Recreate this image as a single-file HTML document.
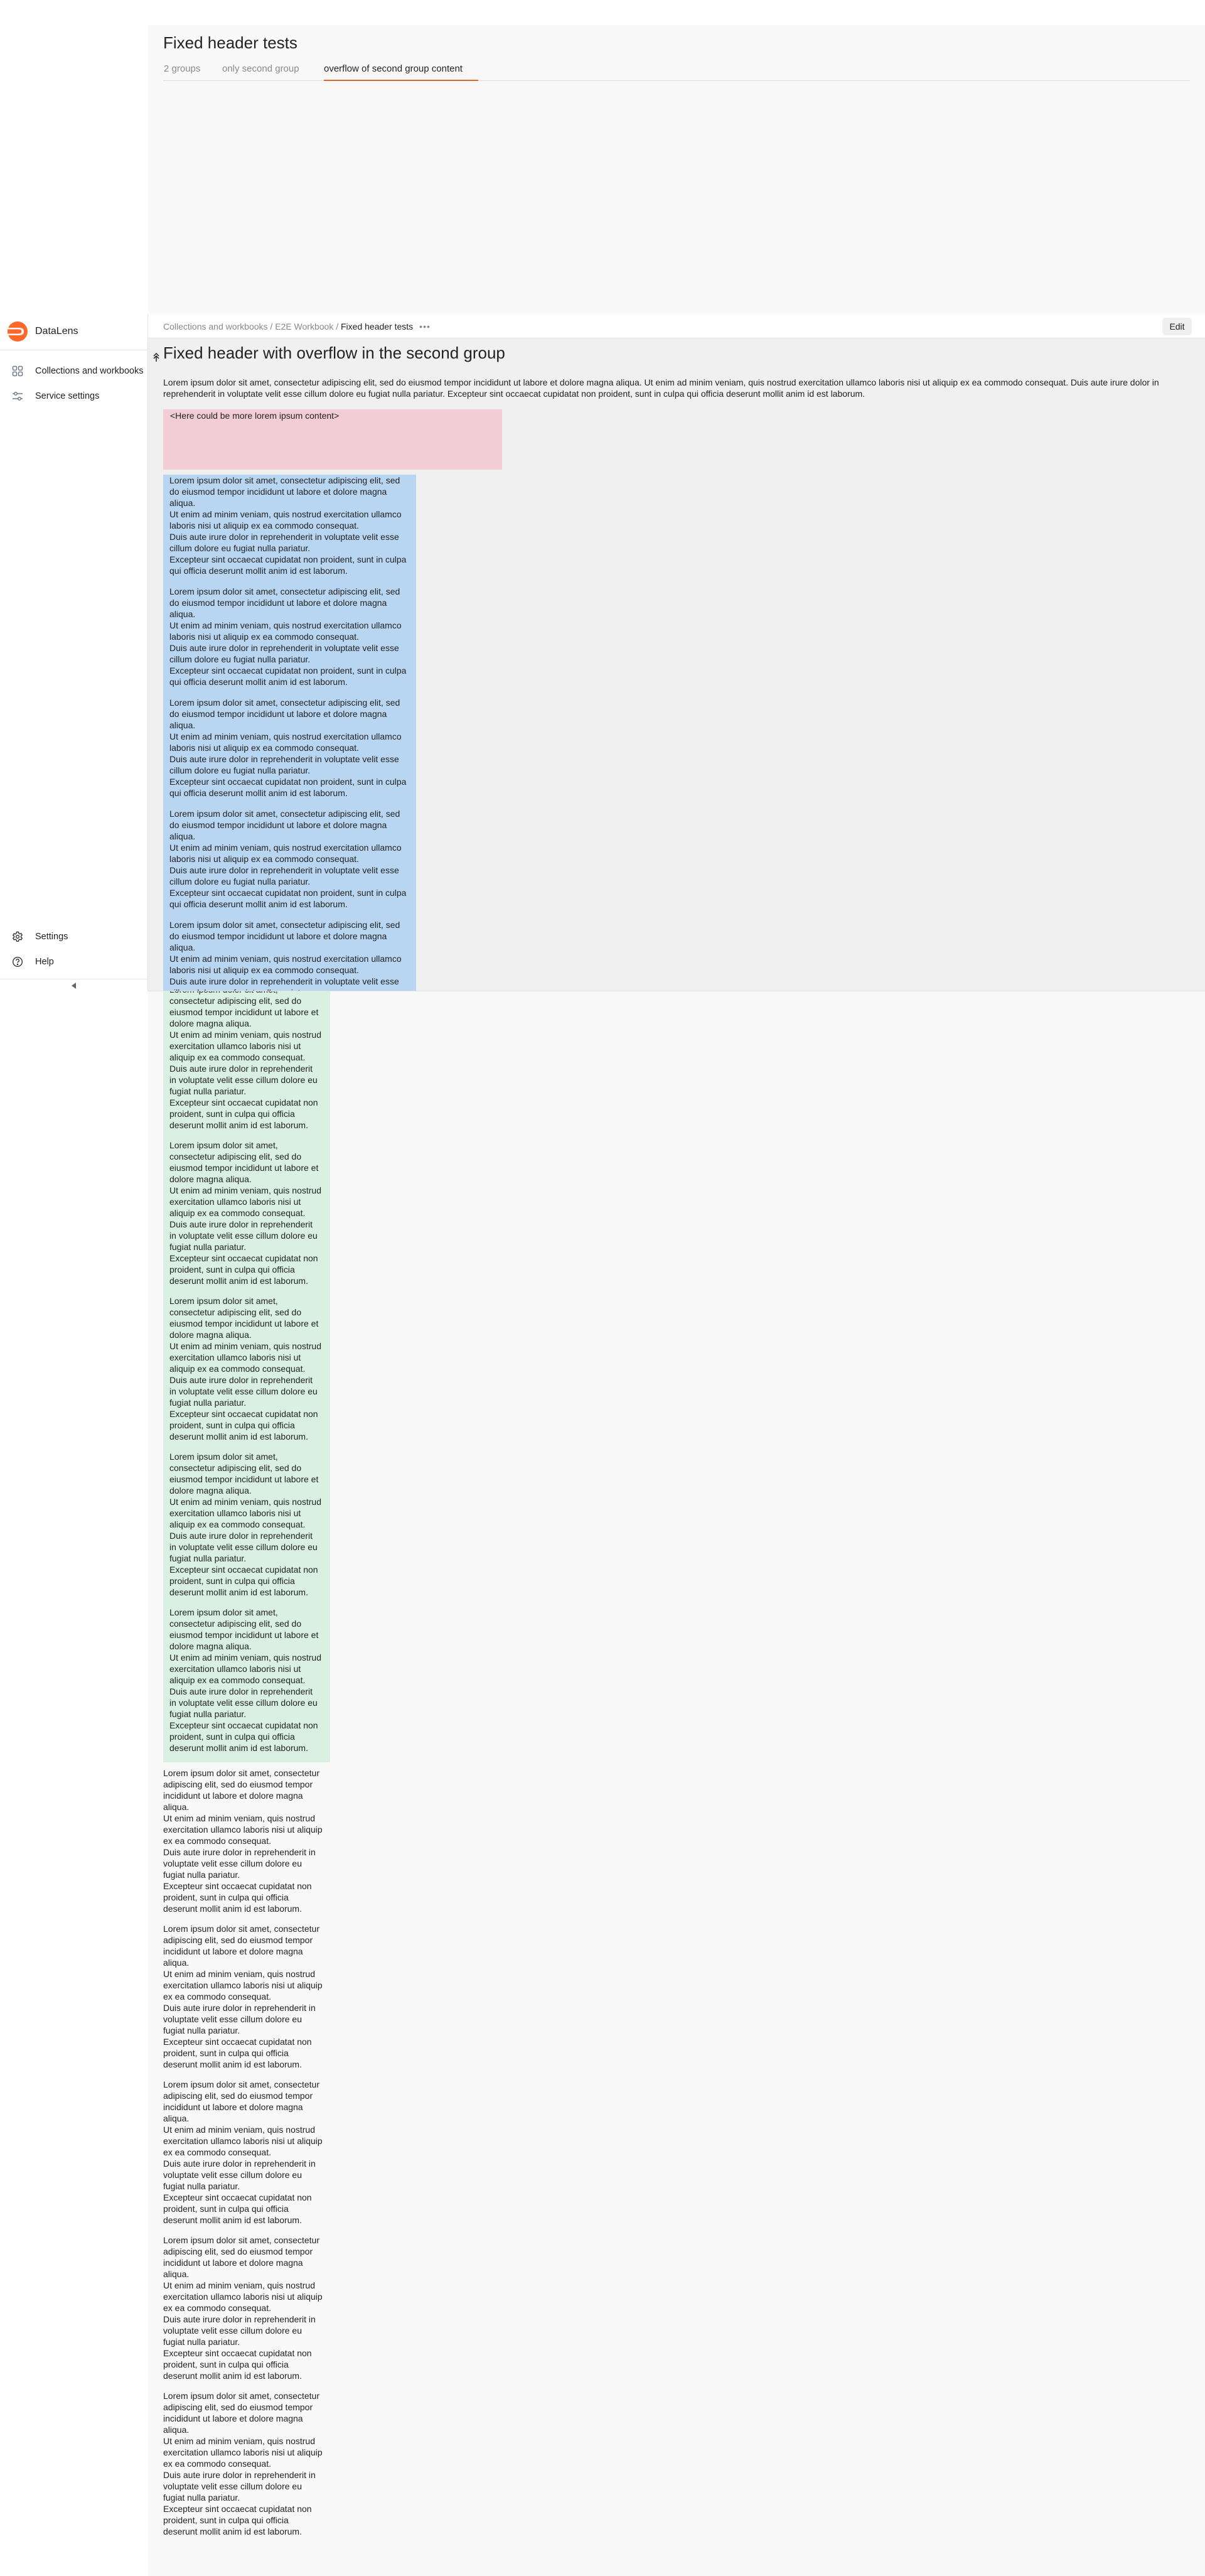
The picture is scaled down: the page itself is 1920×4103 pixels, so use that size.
<!DOCTYPE html>
<html><head><meta charset="utf-8"><style>
*{box-sizing:border-box;margin:0;padding:0}
body{width:1920px;height:4103px;position:relative;background:#fff;font-family:"Liberation Sans",Arial,sans-serif;color:#222;overflow:hidden}
.abs{position:absolute}
.main{left:236px;top:40px;width:1684px;height:4063px;background:#f9f9f9}
.t{font-size:14px;line-height:18px;white-space:nowrap;color:#222}
.p{margin-bottom:14px}
.blue .p{margin-bottom:15px}
</style></head><body>
<div class="abs main"></div>
<div class="abs" style="left:260px;top:52px;font-size:26px;line-height:32px;color:#222">Fixed header tests</div>
<div class="abs" style="left:261px;top:101px;font-size:15px;line-height:18px;color:#8a8a8a">2 groups</div>
<div class="abs" style="left:354px;top:101px;font-size:15px;line-height:18px;color:#8a8a8a">only second group</div>
<div class="abs" style="left:516px;top:101px;font-size:15px;line-height:18px;color:#222">overflow of second group content</div>
<div class="abs" style="left:260px;top:128px;width:1636px;height:1px;background:#dedede"></div>
<div class="abs" style="left:516px;top:127px;width:246px;height:2px;background:#e8612c"></div>

<!-- green box -->
<div class="abs" style="left:260px;top:1540px;width:266px;height:1267px;background:#d9f0e3"></div>
<div class="abs t" style="left:270px;top:1567px">
<div class="p">Lorem ipsum dolor sit amet,<br>consectetur adipiscing elit, sed do<br>eiusmod tempor incididunt ut labore et<br>dolore magna aliqua.<br>Ut enim ad minim veniam, quis nostrud<br>exercitation ullamco laboris nisi ut<br>aliquip ex ea commodo consequat.<br>Duis aute irure dolor in reprehenderit<br>in voluptate velit esse cillum dolore eu<br>fugiat nulla pariatur.<br>Excepteur sint occaecat cupidatat non<br>proident, sunt in culpa qui officia<br>deserunt mollit anim id est laborum.</div>
<div class="p">Lorem ipsum dolor sit amet,<br>consectetur adipiscing elit, sed do<br>eiusmod tempor incididunt ut labore et<br>dolore magna aliqua.<br>Ut enim ad minim veniam, quis nostrud<br>exercitation ullamco laboris nisi ut<br>aliquip ex ea commodo consequat.<br>Duis aute irure dolor in reprehenderit<br>in voluptate velit esse cillum dolore eu<br>fugiat nulla pariatur.<br>Excepteur sint occaecat cupidatat non<br>proident, sunt in culpa qui officia<br>deserunt mollit anim id est laborum.</div>
<div class="p">Lorem ipsum dolor sit amet,<br>consectetur adipiscing elit, sed do<br>eiusmod tempor incididunt ut labore et<br>dolore magna aliqua.<br>Ut enim ad minim veniam, quis nostrud<br>exercitation ullamco laboris nisi ut<br>aliquip ex ea commodo consequat.<br>Duis aute irure dolor in reprehenderit<br>in voluptate velit esse cillum dolore eu<br>fugiat nulla pariatur.<br>Excepteur sint occaecat cupidatat non<br>proident, sunt in culpa qui officia<br>deserunt mollit anim id est laborum.</div>
<div class="p">Lorem ipsum dolor sit amet,<br>consectetur adipiscing elit, sed do<br>eiusmod tempor incididunt ut labore et<br>dolore magna aliqua.<br>Ut enim ad minim veniam, quis nostrud<br>exercitation ullamco laboris nisi ut<br>aliquip ex ea commodo consequat.<br>Duis aute irure dolor in reprehenderit<br>in voluptate velit esse cillum dolore eu<br>fugiat nulla pariatur.<br>Excepteur sint occaecat cupidatat non<br>proident, sunt in culpa qui officia<br>deserunt mollit anim id est laborum.</div>
<div class="p">Lorem ipsum dolor sit amet,<br>consectetur adipiscing elit, sed do<br>eiusmod tempor incididunt ut labore et<br>dolore magna aliqua.<br>Ut enim ad minim veniam, quis nostrud<br>exercitation ullamco laboris nisi ut<br>aliquip ex ea commodo consequat.<br>Duis aute irure dolor in reprehenderit<br>in voluptate velit esse cillum dolore eu<br>fugiat nulla pariatur.<br>Excepteur sint occaecat cupidatat non<br>proident, sunt in culpa qui officia<br>deserunt mollit anim id est laborum.</div>
</div>

<!-- plain -->
<div class="abs t" style="left:260px;top:2815px">
<div class="p">Lorem ipsum dolor sit amet, consectetur<br>adipiscing elit, sed do eiusmod tempor<br>incididunt ut labore et dolore magna<br>aliqua.<br>Ut enim ad minim veniam, quis nostrud<br>exercitation ullamco laboris nisi ut aliquip<br>ex ea commodo consequat.<br>Duis aute irure dolor in reprehenderit in<br>voluptate velit esse cillum dolore eu<br>fugiat nulla pariatur.<br>Excepteur sint occaecat cupidatat non<br>proident, sunt in culpa qui officia<br>deserunt mollit anim id est laborum.</div>
<div class="p">Lorem ipsum dolor sit amet, consectetur<br>adipiscing elit, sed do eiusmod tempor<br>incididunt ut labore et dolore magna<br>aliqua.<br>Ut enim ad minim veniam, quis nostrud<br>exercitation ullamco laboris nisi ut aliquip<br>ex ea commodo consequat.<br>Duis aute irure dolor in reprehenderit in<br>voluptate velit esse cillum dolore eu<br>fugiat nulla pariatur.<br>Excepteur sint occaecat cupidatat non<br>proident, sunt in culpa qui officia<br>deserunt mollit anim id est laborum.</div>
<div class="p">Lorem ipsum dolor sit amet, consectetur<br>adipiscing elit, sed do eiusmod tempor<br>incididunt ut labore et dolore magna<br>aliqua.<br>Ut enim ad minim veniam, quis nostrud<br>exercitation ullamco laboris nisi ut aliquip<br>ex ea commodo consequat.<br>Duis aute irure dolor in reprehenderit in<br>voluptate velit esse cillum dolore eu<br>fugiat nulla pariatur.<br>Excepteur sint occaecat cupidatat non<br>proident, sunt in culpa qui officia<br>deserunt mollit anim id est laborum.</div>
<div class="p">Lorem ipsum dolor sit amet, consectetur<br>adipiscing elit, sed do eiusmod tempor<br>incididunt ut labore et dolore magna<br>aliqua.<br>Ut enim ad minim veniam, quis nostrud<br>exercitation ullamco laboris nisi ut aliquip<br>ex ea commodo consequat.<br>Duis aute irure dolor in reprehenderit in<br>voluptate velit esse cillum dolore eu<br>fugiat nulla pariatur.<br>Excepteur sint occaecat cupidatat non<br>proident, sunt in culpa qui officia<br>deserunt mollit anim id est laborum.</div>
<div class="p">Lorem ipsum dolor sit amet, consectetur<br>adipiscing elit, sed do eiusmod tempor<br>incididunt ut labore et dolore magna<br>aliqua.<br>Ut enim ad minim veniam, quis nostrud<br>exercitation ullamco laboris nisi ut aliquip<br>ex ea commodo consequat.<br>Duis aute irure dolor in reprehenderit in<br>voluptate velit esse cillum dolore eu<br>fugiat nulla pariatur.<br>Excepteur sint occaecat cupidatat non<br>proident, sunt in culpa qui officia<br>deserunt mollit anim id est laborum.</div>
</div>

<!-- sidebar -->
<div class="abs" style="left:0;top:500px;width:236px;height:1079px;background:#fff;border-right:1px solid #e5e5e5"></div>
<svg class="abs" style="left:12px;top:512px" width="32" height="32" viewBox="0 0 32 32"><circle cx="16" cy="16" r="16" fill="#fc6a2b"/><path d="M0 10 H18 Q26 10 26 16 Q26 22 18 22 H0 Z" fill="#fff" opacity="0.95"/><path d="M0 12.5 H17 Q22.5 12.5 22.5 16 Q22.5 19.5 17 19.5 H0 Z" fill="#fc6a2b"/></svg>
<div class="abs" style="left:56px;top:519px;font-size:16px;line-height:18px;color:#222">DataLens</div>
<div class="abs" style="left:0;top:557px;width:236px;height:1px;background:#e5e5e5"></div>
<svg class="abs" style="left:19px;top:582px" width="18" height="18" viewBox="0 0 18 18" fill="none" stroke="#6e7a8a" stroke-width="1.5"><rect x="1.5" y="1.5" width="6" height="6" rx="1.5"/><rect x="10.5" y="1.5" width="6" height="6" rx="1.5"/><rect x="1.5" y="10.5" width="6" height="6" rx="1.5"/><rect x="10.5" y="10.5" width="6" height="6" rx="1.5"/></svg>
<div class="abs" style="left:56px;top:582px;font-size:14.5px;line-height:18px;color:#222">Collections and workbooks</div>
<svg class="abs" style="left:19px;top:622px" width="18" height="18" viewBox="0 0 18 18" fill="none" stroke="#6e7a8a" stroke-width="1.5"><path d="M1 5H17M1 13H17"/><circle cx="6" cy="5" r="2.2" fill="#fff"/><circle cx="12" cy="13" r="2.2" fill="#fff"/></svg>
<div class="abs" style="left:56px;top:622px;font-size:14.5px;line-height:18px;color:#222">Service settings</div>
<svg class="abs" style="left:19px;top:1483px" width="18" height="18" viewBox="0 0 18 18" fill="none" stroke="#333" stroke-width="1.4"><path d="M7.5 1.5h3l.5 2.2 1.6.9 2.1-.8 1.5 2.6-1.7 1.5v1.9l1.7 1.5-1.5 2.6-2.1-.8-1.6.9-.5 2.2h-3l-.5-2.2-1.6-.9-2.1.8-1.5-2.6 1.7-1.5V8.1L1.8 6.6l1.5-2.6 2.1.8L7 3.7z"/><circle cx="9" cy="9" r="2.4"/></svg>
<div class="abs" style="left:56px;top:1483px;font-size:14.5px;line-height:18px;color:#222">Settings</div>
<svg class="abs" style="left:19px;top:1523px" width="18" height="18" viewBox="0 0 18 18" fill="none" stroke="#333" stroke-width="1.4"><circle cx="9" cy="9" r="7.3"/><path d="M6.8 7a2.2 2.2 0 1 1 3 2c-.6.3-.8.7-.8 1.4"/><circle cx="9" cy="12.9" r=".6" fill="#333"/></svg>
<div class="abs" style="left:56px;top:1523px;font-size:14.5px;line-height:18px;color:#222">Help</div>
<div class="abs" style="left:0;top:1559px;width:236px;height:1px;background:#e5e5e5"></div>
<svg class="abs" style="left:114px;top:1565px" width="8" height="10" viewBox="0 0 8 10"><path d="M7 0V10L0 5Z" fill="#666"/></svg>

<!-- fixed header overlay -->
<div class="abs" style="left:236px;top:500px;width:1684px;height:1079px;background:#f0f0f0;overflow:hidden;border-bottom:1px solid #e2e2e2">
  <div class="abs" style="left:0;top:0;width:1684px;height:39px;background:#fff;border-bottom:1px solid #e5e5e5"></div>
  <div class="abs" style="left:24px;top:11px;font-size:14px;line-height:18px;white-space:nowrap;color:#888">Collections and workbooks / E2E Workbook / <span style="color:#222">Fixed header tests</span><span style="color:#888;margin-left:10px;letter-spacing:1px">•••</span></div>
  <div class="abs" style="left:1616px;top:6px;width:47px;height:28px;background:#efefef;border-radius:6px;font-size:14px;line-height:28px;text-align:center;color:#222">Edit</div>
  <svg class="abs" style="left:7px;top:62px" width="12" height="14" viewBox="0 0 12 14" fill="none" stroke="#222" stroke-width="1.5"><path d="M2 5L6 1L10 5M2 9L6 5L10 9M6 5V14"/></svg>
  <div class="abs" style="left:24px;top:46px;font-size:26px;line-height:32px;white-space:nowrap;color:#222">Fixed header with overflow in the second group</div>
  <div class="abs t" style="left:24px;top:100px">Lorem ipsum dolor sit amet, consectetur adipiscing elit, sed do eiusmod tempor incididunt ut labore et dolore magna aliqua. Ut enim ad minim veniam, quis nostrud exercitation ullamco laboris nisi ut aliquip ex ea commodo consequat. Duis aute irure dolor in<br>reprehenderit in voluptate velit esse cillum dolore eu fugiat nulla pariatur. Excepteur sint occaecat cupidatat non proident, sunt in culpa qui officia deserunt mollit anim id est laborum.</div>
  <div class="abs" style="left:24px;top:152px;width:540px;height:96px;background:#f2cdd6"></div>
  <div class="abs t" style="left:35px;top:153px">&lt;Here could be more lorem ipsum content&gt;</div>
  <div class="abs blue" style="left:24px;top:256px;width:403px;height:900px;background:#b8d5f2">
   <div class="t" style="padding:0 0 0 10px">
    <div class="p">Lorem ipsum dolor sit amet, consectetur adipiscing elit, sed<br>do eiusmod tempor incididunt ut labore et dolore magna<br>aliqua.<br>Ut enim ad minim veniam, quis nostrud exercitation ullamco<br>laboris nisi ut aliquip ex ea commodo consequat.<br>Duis aute irure dolor in reprehenderit in voluptate velit esse<br>cillum dolore eu fugiat nulla pariatur.<br>Excepteur sint occaecat cupidatat non proident, sunt in culpa<br>qui officia deserunt mollit anim id est laborum.</div>
    <div class="p">Lorem ipsum dolor sit amet, consectetur adipiscing elit, sed<br>do eiusmod tempor incididunt ut labore et dolore magna<br>aliqua.<br>Ut enim ad minim veniam, quis nostrud exercitation ullamco<br>laboris nisi ut aliquip ex ea commodo consequat.<br>Duis aute irure dolor in reprehenderit in voluptate velit esse<br>cillum dolore eu fugiat nulla pariatur.<br>Excepteur sint occaecat cupidatat non proident, sunt in culpa<br>qui officia deserunt mollit anim id est laborum.</div>
    <div class="p">Lorem ipsum dolor sit amet, consectetur adipiscing elit, sed<br>do eiusmod tempor incididunt ut labore et dolore magna<br>aliqua.<br>Ut enim ad minim veniam, quis nostrud exercitation ullamco<br>laboris nisi ut aliquip ex ea commodo consequat.<br>Duis aute irure dolor in reprehenderit in voluptate velit esse<br>cillum dolore eu fugiat nulla pariatur.<br>Excepteur sint occaecat cupidatat non proident, sunt in culpa<br>qui officia deserunt mollit anim id est laborum.</div>
    <div class="p">Lorem ipsum dolor sit amet, consectetur adipiscing elit, sed<br>do eiusmod tempor incididunt ut labore et dolore magna<br>aliqua.<br>Ut enim ad minim veniam, quis nostrud exercitation ullamco<br>laboris nisi ut aliquip ex ea commodo consequat.<br>Duis aute irure dolor in reprehenderit in voluptate velit esse<br>cillum dolore eu fugiat nulla pariatur.<br>Excepteur sint occaecat cupidatat non proident, sunt in culpa<br>qui officia deserunt mollit anim id est laborum.</div>
    <div class="p">Lorem ipsum dolor sit amet, consectetur adipiscing elit, sed<br>do eiusmod tempor incididunt ut labore et dolore magna<br>aliqua.<br>Ut enim ad minim veniam, quis nostrud exercitation ullamco<br>laboris nisi ut aliquip ex ea commodo consequat.<br>Duis aute irure dolor in reprehenderit in voluptate velit esse<br>cillum dolore eu fugiat nulla pariatur.<br>Excepteur sint occaecat cupidatat non proident, sunt in culpa<br>qui officia deserunt mollit anim id est laborum.</div>
   </div>
  </div>
</div>
</body></html>
